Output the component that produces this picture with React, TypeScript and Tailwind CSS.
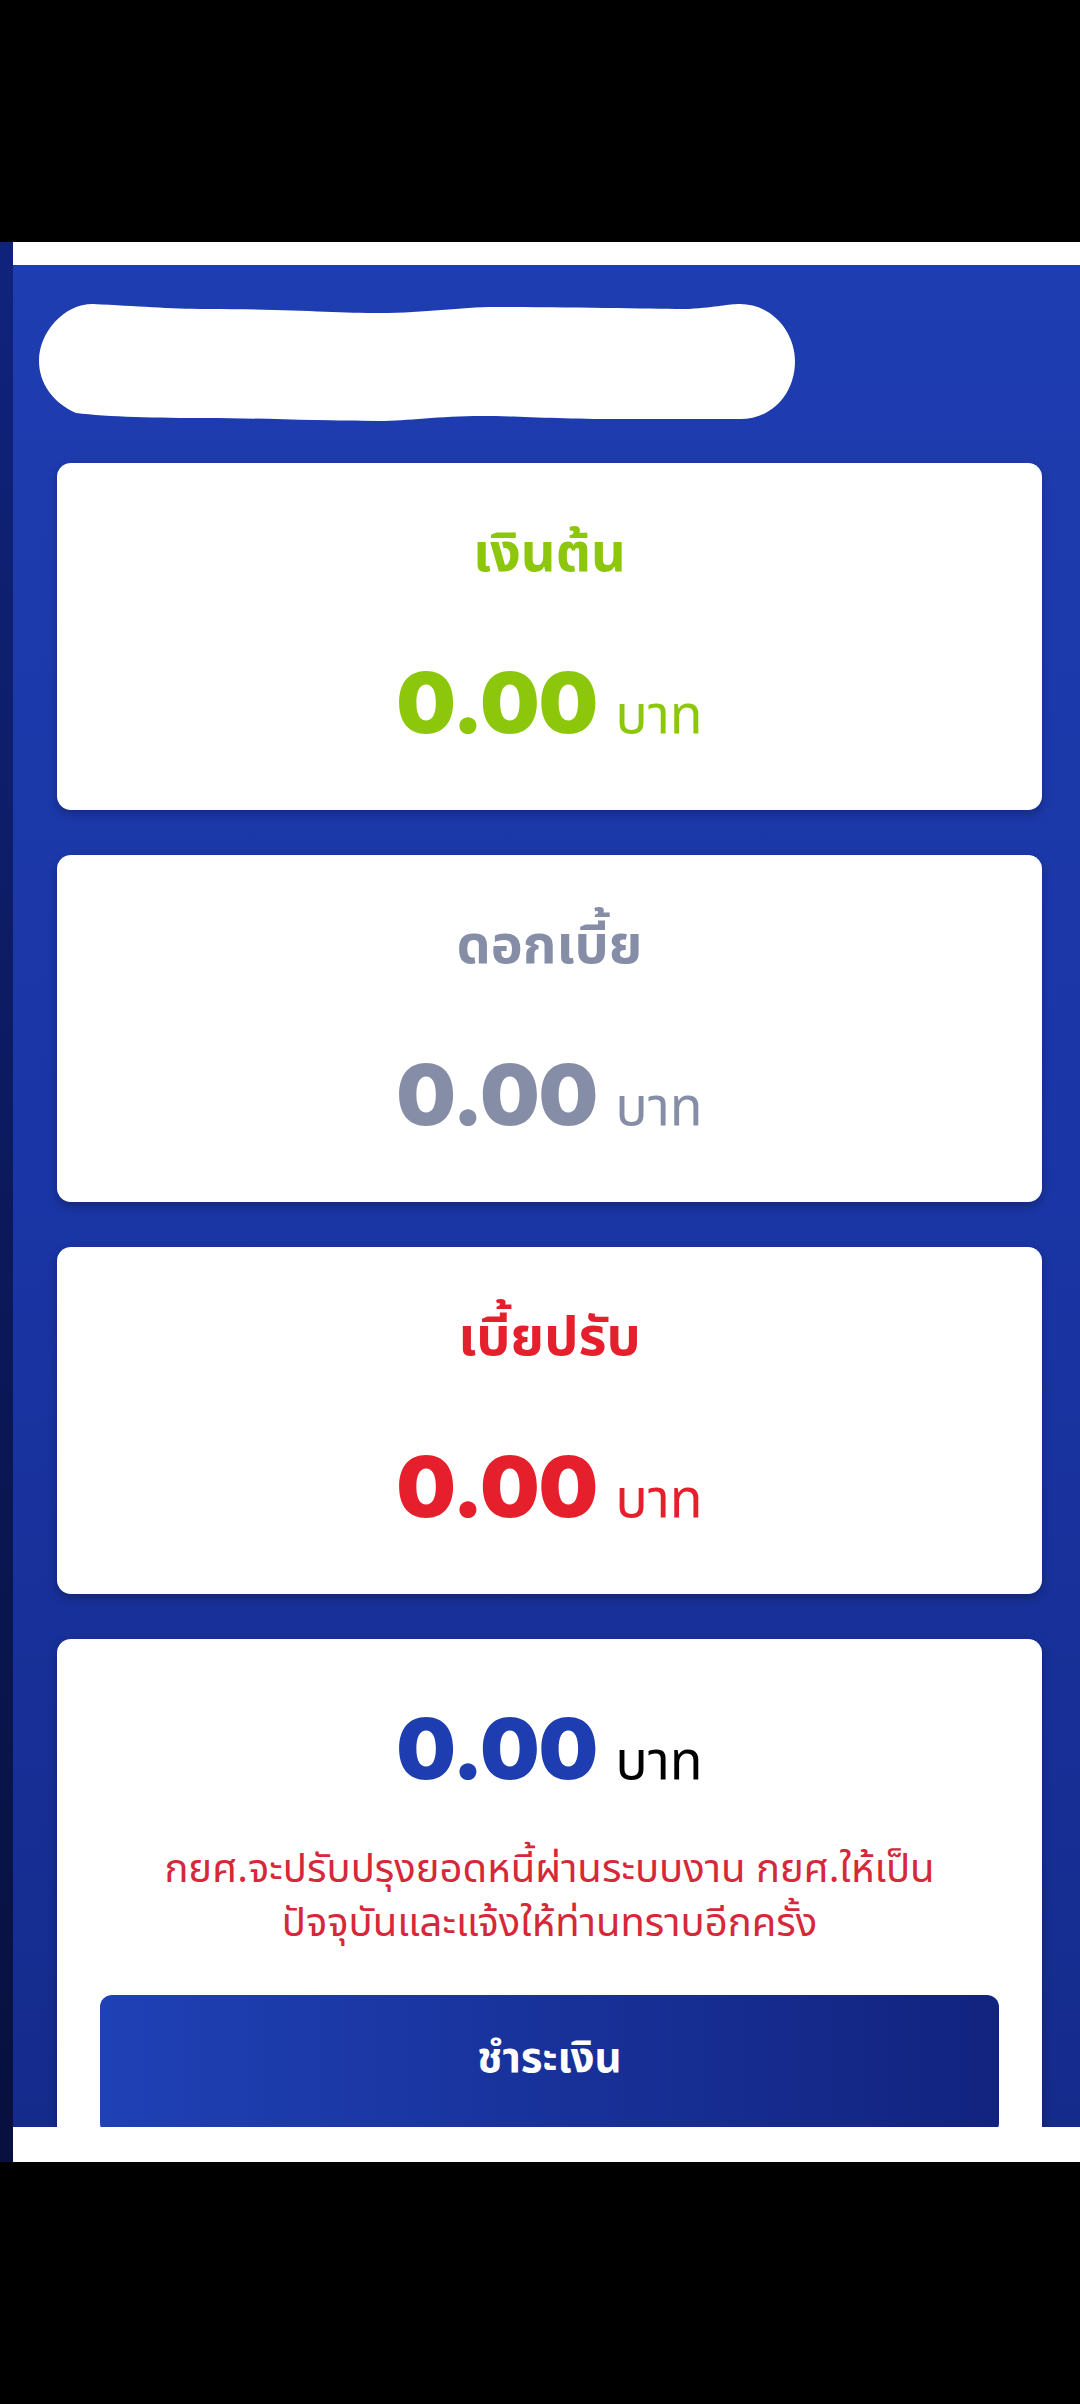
import React from 'react';

const thai = { fontFamily: '"Noto Sans Thai", "Noto Sans", "DejaVu Sans", sans-serif' };
const num = { fontFamily: 'Inter, "Noto Sans", sans-serif' };

function Amount({ color, unitColor }: { color: string; unitColor: string }) {
    return (
        <div className="flex items-baseline justify-center gap-[18px]">
            <span style={num} className={`text-[84px] font-black leading-none tracking-[-1px] ${color}`}>
                0.00
            </span>
            <span style={thai} className={`text-[54px] leading-none ${unitColor}`}>
                บาท
            </span>
        </div>
    );
}

function SummaryCard({ title, color }: { title: string; color: string }) {
    return (
        <div className="flex h-[347px] w-[985px] flex-col items-center rounded-[14px] bg-white pt-[56px] shadow-[0_4px_10px_rgba(0,0,0,0.25)]">
            <p style={thai} className={`text-[54px] font-bold leading-[72px] ${color}`}>
                {title}
            </p>
            <div className="mt-[70px]">
                <Amount color={color} unitColor={color} />
            </div>
        </div>
    );
}

function Scribble() {
    return (
        <svg width="758" height="119" viewBox="0 0 758 119" className="ml-[25px] block">
            <path
                fill="#ffffff"
                d="M55 1 C100 3 130 6 169 6 C250 6 300 10 341 10 C390 10 420 4 458 4 C540 4 620 6 651 6 C680 4 690 1 702 1 C735 1 757 30 757 58 C757 90 735 116 702 116 C660 116 620 116 582 116 C520 116 480 113 444 113 C400 113 370 118 341 118 C280 118 220 115 169 115 C120 115 70 114 38 110 C15 100 1 80 1 58 C1 30 25 1 55 1 Z"
            />
        </svg>
    );
}

export default function App() {
    return (
        <div className="flex h-[2404px] w-[1080px] flex-col overflow-hidden bg-black">
            <div className="h-[242px] shrink-0" />
            <div className="flex h-[1920px] shrink-0">
                <div className="w-[13px] shrink-0 bg-gradient-to-b from-[#10237c] to-[#07103e]" />
                <div className="flex flex-1 flex-col">
                    <div className="h-[23px] shrink-0 bg-white" />
                    <div className="flex-1 overflow-hidden bg-gradient-to-b from-[#1e3db0] via-[#1a35a5] to-[#152b8c] pt-[38px]">
                        <Scribble />
                        <div className="ml-[44px] mt-[41px] flex flex-col gap-[45px]">
                            <SummaryCard title="เงินต้น" color="text-[#8cc70c]" />
                            <SummaryCard title="ดอกเบี้ย" color="text-[#868da6]" />
                            <SummaryCard title="เบี้ยปรับ" color="text-[#e61f2c]" />
                            <div className="flex h-[560px] w-[985px] flex-col items-center rounded-[14px] bg-white pt-[68px] shadow-[0_4px_10px_rgba(0,0,0,0.25)]">
                                <Amount color="text-[#1e3db0]" unitColor="text-black" />
                                <p
                                    style={thai}
                                    className="mt-[52px] text-center text-[40px] leading-[54px] text-[#d62839]"
                                >
                                    กยศ.จะปรับปรุงยอดหนี้ผ่านระบบงาน กยศ.ให้เป็น
                                    <br />
                                    ปัจจุบันและแจ้งให้ท่านทราบอีกครั้ง
                                </p>
                                <button
                                    style={thai}
                                    className="mt-[44px] flex h-[140px] w-[899px] shrink-0 items-start justify-center rounded-[12px] bg-gradient-to-r from-[#1f41b6] to-[#12237f] pt-[34px] text-[42px] font-bold leading-[60px] text-white"
                                >
                                    ชำระเงิน
                                </button>
                            </div>
                        </div>
                    </div>
                    <div className="h-[35px] shrink-0 bg-white" />
                </div>
            </div>
        </div>
    );
}
